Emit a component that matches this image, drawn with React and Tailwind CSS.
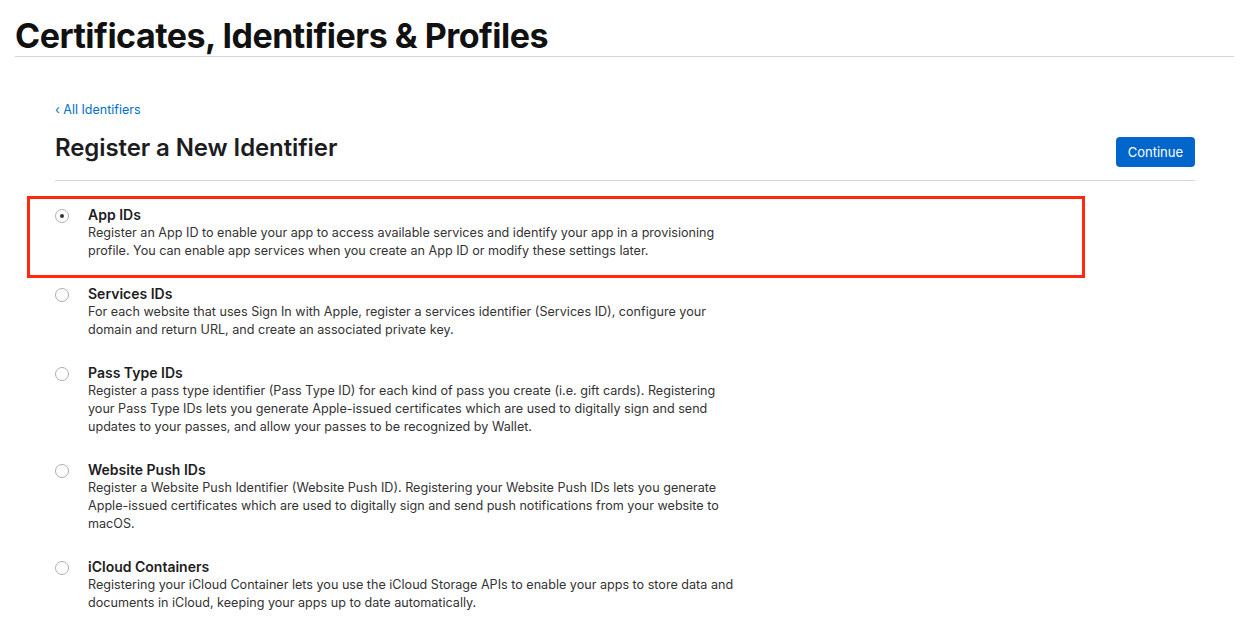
import React, { useState } from "react";

const options = [
  {
    id: "app",
    title: "App IDs",
    desc: "Register an App ID to enable your app to access available services and identify your app in a provisioning profile. You can enable app services when you create an App ID or modify these settings later.",
  },
  {
    id: "services",
    title: "Services IDs",
    desc: "For each website that uses Sign In with Apple, register a services identifier (Services ID), configure your domain and return URL, and create an associated private key.",
  },
  {
    id: "pass",
    title: "Pass Type IDs",
    desc: "Register a pass type identifier (Pass Type ID) for each kind of pass you create (i.e. gift cards). Registering your Pass Type IDs lets you generate Apple-issued certificates which are used to digitally sign and send updates to your passes, and allow your passes to be recognized by Wallet.",
  },
  {
    id: "push",
    title: "Website Push IDs",
    desc: "Register a Website Push Identifier (Website Push ID). Registering your Website Push IDs lets you generate Apple-issued certificates which are used to digitally sign and send push notifications from your website to macOS.",
  },
  {
    id: "icloud",
    title: "iCloud Containers",
    desc: "Registering your iCloud Container lets you use the iCloud Storage APIs to enable your apps to store data and documents in iCloud, keeping your apps up to date automatically.",
  },
];

const Radio = ({ checked }) => (
  <span className="mt-[3px] flex h-[14px] w-[14px] shrink-0 items-center justify-center rounded-full border border-[#adadad] bg-white">
    {checked && <span className="h-[4px] w-[4px] rounded-full bg-[#333]" />}
  </span>
);

const Option = ({ item, selected, onSelect }) => (
  <label className="flex cursor-pointer gap-[19px]" onClick={() => onSelect(item.id)}>
    <Radio checked={selected} />
    <div className="w-[652px]">
      <div className="text-[14px] font-semibold leading-[18px] text-[#1d1d1f]">{item.title}</div>
      <p className="text-[12.6px] leading-[18px] text-[#333]">{item.desc}</p>
    </div>
  </label>
);

export default function App() {
  const [selected, setSelected] = useState("app");

  return (
    <div className="min-h-screen bg-white font-['Inter',sans-serif] text-[#1d1d1f]">
      <div className="pl-[15px] pr-[11px] pt-[17px]">
        <h1 className="border-b border-[#d6d6d6] pb-[1px] text-[34px] font-bold leading-[38px] tracking-[-0.5px] text-[#111]">
          Certificates, Identifiers &amp; Profiles
        </h1>
      </div>

      <div className="ml-[55px] w-[1140px] pt-[44px]">
        <a href="#" className="block text-[12.5px] leading-[18px] text-[#0070c9]">
          ‹ All Identifiers
        </a>
        <div className="flex items-start justify-between border-b border-[#d6d6d6] pb-[13px] pt-[14px]">
          <h2 className="text-[24px] font-semibold leading-[30px] tracking-[-0.1px]">Register a New Identifier</h2>
          <button className="mt-[4px] h-[30px] rounded-[4px] bg-[#0066cc] px-[12px] text-[13px] leading-[18px] text-white">
            Continue
          </button>
        </div>
      </div>

      <div className="flex flex-col gap-[25px] pt-[25px] pl-[55px]">
        {options.map((item) => (
          <div
            key={item.id}
            className={
              item.id === "app"
                ? "-mt-[10px] -mb-[18px] -ml-[28px] w-[1058px] border-[3px] border-[#ff2a0d] pt-[7px] pb-[15px] pl-[25px]"
                : ""
            }
          >
            <Option item={item} selected={selected === item.id} onSelect={setSelected} />
          </div>
        ))}
      </div>
    </div>
  );
}
